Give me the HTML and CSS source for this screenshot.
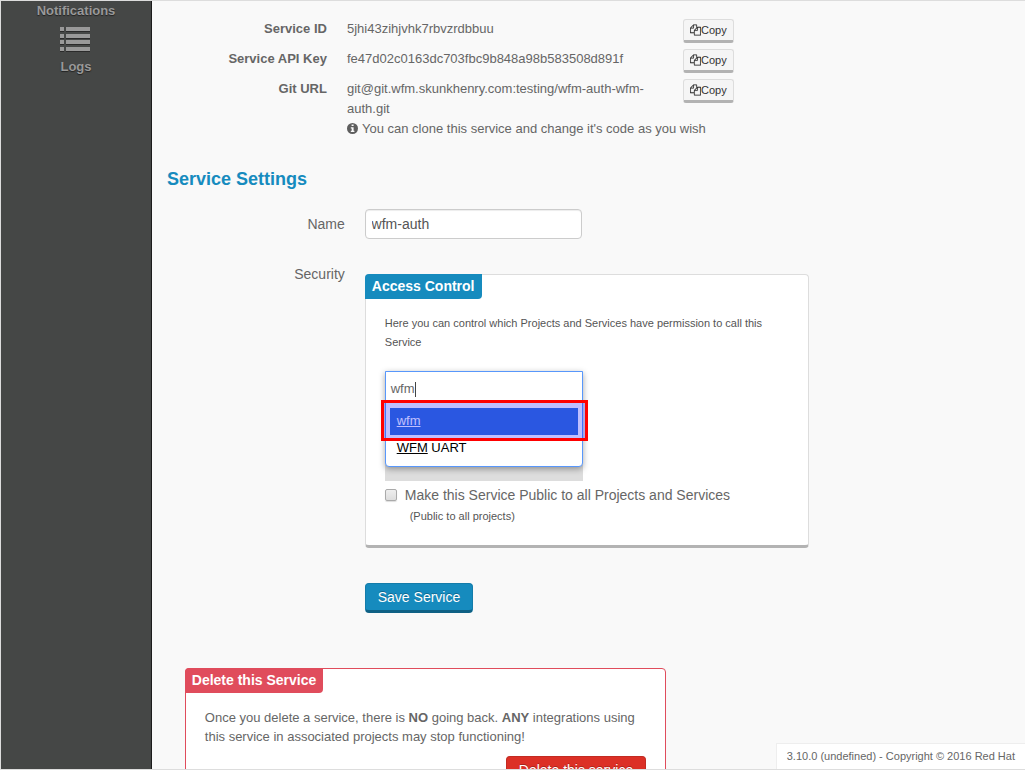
FILE: index.html
```html
<!DOCTYPE html>
<html lang="en">
<head>
<meta charset="utf-8">
<title>Service Settings</title>
<link rel="stylesheet" href="styles.css">
</head>
<body>
<svg class="defs" width="0" height="0" aria-hidden="true">
  <symbol id="copy" viewBox="0 0 1792 1792"><path fill="currentColor" stroke="currentColor" stroke-width="20" d="M1696 384q40 0 68 28t28 68v1216q0 40-28 68t-68 28h-960q-40 0-68-28t-28-68v-288h-544q-40 0-68-28t-28-68v-672q0-40 20-88t48-76l408-408q28-28 76-48t88-20h416q40 0 68 28t28 68v328q68-40 128-40h416zm-544 213l-299 299h299v-299zm-640-384l-299 299h299v-299zm196 647l316-316v-416h-384v416q0 40-28 68t-68 28h-416v640h512v-256q0-40 20-88t48-76zm956 804v-1152h-384v416q0 40-28 68t-68 28h-416v640h896z"/></symbol>
</svg>
<div class="frame">
  <nav class="sidebar">
    <span class="nav-label">Notifications</span>
    <svg class="list-icon" width="30" height="25" viewBox="0 0 30 25" fill="#999"><path d="M0 0h4v4H0zM6 0h24v4H6zM0 7h4v4H0zM6 7h24v4H6zM0 13h4v4H0zM6 13h24v4H6zM0 20h4v4H0zM6 20h24v4H6z"/></svg>
    <span class="nav-label">Logs</span>
  </nav>
  <main class="main">
    <dl class="details">
      <dt>Service ID</dt><dd>5jhi43zihjvhk7rbvzrdbbuu</dd><dd><button class="copy"><svg width="11" height="12"><use href="#copy"/></svg>Copy</button></dd>
      <dt>Service API Key</dt><dd>fe47d02c0163dc703fbc9b848a98b583508d891f</dd><dd><button class="copy"><svg width="11" height="12"><use href="#copy"/></svg>Copy</button></dd>
      <dt>Git URL</dt><dd>git@git.wfm.skunkhenry.com:testing/wfm-auth-wfm-<br>auth.git</dd><dd><button class="copy"><svg width="11" height="12"><use href="#copy"/></svg>Copy</button></dd>
    </dl>
    <p class="hint"><svg width="11" height="11" viewBox="0 0 11 11"><circle cx="5.5" cy="5.5" r="5.5" fill="#5e5e5e"/><path fill="#f9f9f9" d="M4.6 1.4h2v1.7h-2zM3.8 4.2h2.8v3.6h.8v1.3H3.8V7.8h.9V5.4h-.9z"/></svg>You can clone this service and change it's code as you wish</p>
    <h2 class="heading">Service Settings</h2>
    <div class="field">
      <label class="field-label" for="name">Name</label>
      <input class="text-input" id="name" type="text" value="wfm-auth">
    </div>
    <div class="field security">
      <span class="field-label">Security</span>
      <section class="panel access">
        <h3 class="tag">Access Control</h3>
        <p class="access-copy">Here you can control which Projects and Services have permission to call this Service</p>
        <div class="picker">
          <div class="dropdown">
            <div class="query">wfm<i class="caret"></i></div>
            <div class="option selected"><u>wfm</u></div>
            <div class="option"><u>WFM</u> UART</div>
            <div class="marker"></div>
          </div>
        </div>
        <div class="public"><span class="checkbox"></span>Make this Service Public to all Projects and Services</div>
        <div class="public-note">(Public to all projects)</div>
      </section>
    </div>
    <button class="save">Save Service</button>
    <section class="panel danger">
      <h3 class="tag">Delete this Service</h3>
      <p class="danger-copy">Once you delete a service, there is <b>NO</b> going back. <b>ANY</b> integrations using this service in associated projects may stop functioning!</p>
      <button class="delete">Delete this service</button>
    </section>
  </main>
  <footer class="footer">3.10.0 (undefined) - Copyright © 2016 Red Hat</footer>
</div>
</body>
</html>
```
FILE: styles.css
```css
* { box-sizing: border-box; }
body { margin: 0; font: 13px/20px "Liberation Sans", Arial, sans-serif; color: #666; background: #f9f9f9; }
h2, h3, p, dl, dd { margin: 0; }
button { font-family: inherit; }
.defs { position: absolute; }
.frame { position: relative; display: flex; width: 1025px; height: 770px; border: 1px solid #ddd; border-right: 0; overflow: hidden; }

.sidebar { flex: none; display: flex; flex-direction: column; align-items: center; width: 151px; background: #454746; border-right: 1px solid #1c1c1c; }
.nav-label { font-weight: bold; color: #999; text-shadow: 0 1px 1px #222; line-height: 20px; }
.list-icon { margin: 6px 2px 5px 0; filter: drop-shadow(0 1px 0 #2a2a2a); }

.main { flex: 1; display: flex; flex-direction: column; align-items: flex-start; padding: 18px 0 0 15px; }
.details { display: grid; grid-template-columns: 160px 316px 51px; column-gap: 20px; grid-template-rows: 30px 30px 40px; }
.details dt { font-weight: bold; text-align: right; padding-right: .1px; }
.copy { display: flex; align-items: center; width: 51px; height: 24px; padding: 0 0 0 6px; border: 1px solid #ddd; border-bottom: 3px solid #b3b3b3; border-radius: 3px; background: #f5f5f5; color: #333; font-size: 11px; line-height: 20px; }
.copy svg { flex: none; }
.hint { display: flex; align-items: center; gap: 4px; margin-left: 180px; }
.hint svg { margin-bottom: 2px; }
.heading { margin-top: 30px; font-size: 18px; line-height: 20px; color: #168bbe; }

.field { display: flex; align-items: flex-start; gap: 20px; margin-top: 20px; font-size: 14px; }
.field-label { width: 178px; padding: 5px .2px 0 0; text-align: right; }
.text-input { width: 217px; height: 30px; padding: 4px 6px 4px 5.6px; border: 1px solid #ccc; border-radius: 4px; box-shadow: inset 0 1px 1px rgba(0,0,0,.075); background: #fff; color: #555; font: 14px/20px "Liberation Sans", Arial, sans-serif; }
.security { margin-top: 35px; }
.security .field-label { padding-top: 0; margin-top: -10px; }
.panel { background: #fff; border: 1px solid #ddd; border-radius: 4px; }
.tag { width: 117px; height: 25px; margin: -1px 0 0 -1px; padding-left: 6.8px; border-radius: 4px 0 4px 0; background: #168bbe; color: #fff; font-size: 14px; line-height: 24px; white-space: nowrap; }
.access { width: 444px; height: 274px; border-bottom: 3px solid #b3b3b3; }
.access-copy { width: 400px; margin: 15px 0 0 18.8px; font-size: 11px; line-height: 19px; color: #555; }
.picker { width: 198px; height: 110px; margin: 19px 0 0 19px; background: #ddd; }
.dropdown { position: relative; height: 96px; padding: 0 4px; border: 1px solid #5897fb; border-radius: 0 0 4px 4px; background: #fff; box-shadow: 0 2px 6px rgba(0,0,0,.35); font-size: 13px; color: #000; }
.query { display: flex; align-items: center; height: 36px; padding: 0 .7px 2px; color: #666; }
.caret { width: 1px; height: 15px; margin-left: .7px; background: #444; }
.option { height: 27px; padding-left: 6.7px; line-height: 26px; }
.option.selected { background: #3875d7; color: #fff; }
.marker { position: absolute; left: -5px; top: 28px; width: 207px; height: 41px; border: 3px solid #f00; background: rgba(0,0,255,.25); }
.public { display: flex; align-items: center; gap: 8px; height: 20px; margin: 4px 0 0 18.8px; font-size: 14px; }
.checkbox { width: 12px; height: 12px; border: 1px solid #aaa; border-radius: 2px; background: linear-gradient(#eee, #ddd); box-shadow: 0 1px 1px #ddd; }
.public-note { margin: 1px 0 0 43.7px; font-size: 11px; color: #555; }

.save, .delete { border: 1px solid #147caa; border-bottom: 3px solid #0f6185; border-radius: 4px; color: #fff; background: #168bbe; font-size: 14px; line-height: 20px; text-shadow: 0 -1px 0 rgba(0,0,0,.25); }
.save { width: 108px; height: 30px; margin: 35px 0 0 198px; padding: 3px 0; }
.danger { width: 481px; height: 150px; margin: 55px 0 0 18px; border-color: #e04c5c; display: flex; flex-direction: column; flex: none; }
.danger .tag { width: 138px; background: #e04c5c; }
.danger-copy { width: 445px; margin: 15px 0 0 18.8px; line-height: 19px; }
.delete { align-self: flex-end; width: 140px; height: 30px; margin: 10px 19px 0 0; padding: 3px 0; background: #dc3026; border-color: #c22b22; }
.footer { position: absolute; right: 0; bottom: 0; height: 26px; padding: 2px 10px 0 10px; border: solid #eee; border-width: 1px 0 0 1px; background: #fff; font-size: 11px; }
```
